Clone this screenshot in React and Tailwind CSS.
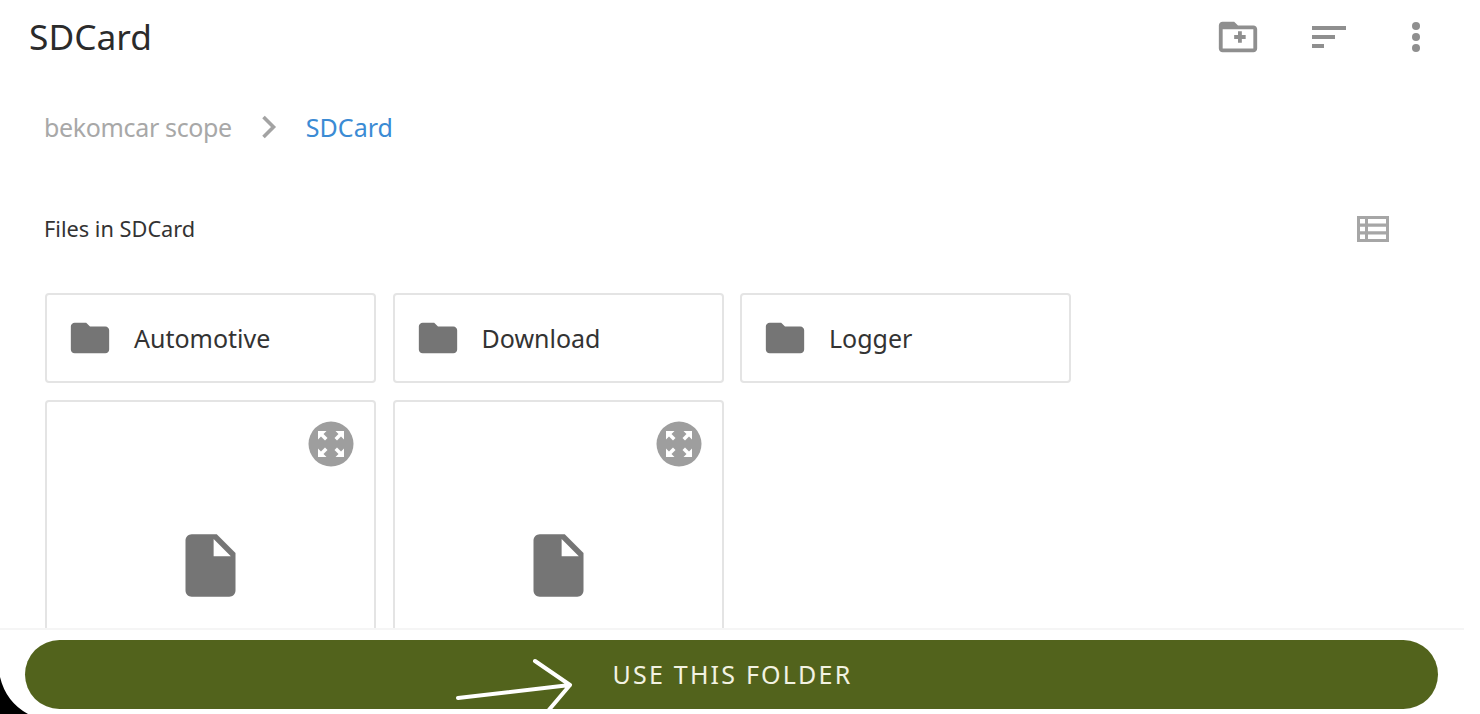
import React from 'react';

const font = { fontFamily: '"Noto Sans", "Open Sans", sans-serif' };

function FolderCard({ name }) {
  return (
    <div className="h-[90px] flex items-center pl-[20px] bg-white border-2 border-[#e4e4e4] rounded-[4px]">
      <svg className="w-[46px] h-[46px] shrink-0" viewBox="0 0 24 24" fill="#757575">
        <path d="M10 4H4c-1.1 0-2 .9-2 2v12c0 1.1.9 2 2 2h16c1.1 0 2-.9 2-2V8c0-1.1-.9-2-2-2h-8l-2-2z" />
      </svg>
      <span className="ml-[21px] text-[25px] leading-none text-[#333333]">{name}</span>
    </div>
  );
}

function FileCard() {
  return (
    <div className="relative h-[240px] flex justify-center pt-[126px] bg-white border-2 border-[#e4e4e4] rounded-[4px]">
      <svg className="absolute top-[19px] right-[20px] w-[46px] h-[46px]" viewBox="0 0 46 46">
        <circle cx="23" cy="23" r="22.5" fill="#9e9e9e" />
        <g fill="#fff">
          <path d="M10 10h8.500l-3 3 4 4-2.500 2.500-4-4-3 3z" />
          <path transform="rotate(90 23 23)" d="M10 10h8.500l-3 3 4 4-2.500 2.500-4-4-3 3z" />
          <path transform="rotate(180 23 23)" d="M10 10h8.500l-3 3 4 4-2.500 2.500-4-4-3 3z" />
          <path transform="rotate(270 23 23)" d="M10 10h8.500l-3 3 4 4-2.500 2.500-4-4-3 3z" />
        </g>
      </svg>
      <svg className="w-[75px] h-[75px]" viewBox="0 0 24 24" fill="#757575">
        <path d="M6 2c-1.100 0-2 .9-2 2v16c0 1.100.9 2 2 2h12c1.100 0 2-.9 2-2V8l-6-6H6zm7 7V3.500L18.500 9H13z" />
      </svg>
    </div>
  );
}

export default function App() {
  return (
    <div className="relative w-[1480px] h-[714px] overflow-hidden bg-white flex flex-col" style={font}>
      <div className="flex-1 min-h-0 overflow-hidden">
        <header className="h-[74px] flex items-center pl-[29px]">
          <h1 className="text-[35.3px] leading-none text-[#2b2b2b]">SDCard</h1>
          <div className="ml-auto flex items-center mr-[59px]">
            <svg className="w-[46px] h-[46px]" viewBox="0 0 24 24" fill="#8f8f8f">
              <path d="M20 6h-8l-2-2H4c-1.110 0-1.990.89-1.990 2L2 18c0 1.110.89 2 2 2h16c1.110 0 2-.89 2-2V8c0-1.110-.89-2-2-2zm0 12H4V8h16v10zm-8-3h2v-2h2v-2h-2V9h-2v2h-2v2h2v2z" />
            </svg>
            <svg className="ml-[50px] w-[36px] h-[24px]" viewBox="0 0 36 24" fill="#8f8f8f">
              <rect x="1" y="1" width="34" height="4" />
              <rect x="1" y="10" width="23" height="4" />
              <rect x="1" y="19" width="12" height="4" />
            </svg>
            <svg className="ml-[64px] w-[10px] h-[32px]" viewBox="0 0 10 32" fill="#8f8f8f">
              <circle cx="5" cy="5" r="4" />
              <circle cx="5" cy="16" r="4" />
              <circle cx="5" cy="27" r="4" />
            </svg>
          </div>
        </header>

        <nav className="mt-[31px] h-[44px] flex items-center pl-[44px] text-[25px] leading-none">
          <span className="text-[#a8a8a8] tracking-[-0.35px]">bekomcar scope</span>
          <svg className="ml-[29px] w-[16px] h-[26px]" viewBox="0 0 16 26" fill="none" stroke="#a3a3a3" strokeWidth="3.6">
            <path d="M2.500 3l10 10-10 10" />
          </svg>
          <span className="ml-[29px] text-[#3b8bd4]">SDCard</span>
        </nav>

        <div className="mt-[58px] h-[44px] flex items-center pl-[44px] pr-[90px]">
          <span className="text-[21.75px] leading-none text-[#333333]">Files in SDCard</span>
          <svg className="ml-auto w-[34px] h-[28px]" viewBox="0 0 34 28" fill="#a6a6a6">
            <path fillRule="evenodd" d="M1 1h32v26H1zM4 4v4.500h5V4zm8 0v4.500h18V4zM4 11.700v4.500h5v-4.500zm8 0v4.500h18v-4.500zM4 19.500V24h5v-4.500zm8 0V24h18v-4.500z" />
          </svg>
        </div>

        <div className="mt-[42px] ml-[45px] grid grid-cols-[repeat(3,331px)] gap-x-[16.5px] gap-y-[17px]">
          <FolderCard name="Automotive" />
          <FolderCard name="Download" />
          <FolderCard name="Logger" />
          <FileCard />
          <FileCard />
        </div>
      </div>

      <div className="relative h-[86px] shrink-0 w-[1464px] bg-white border-t-2 border-[#f5f5f5] pt-[10px] pl-[25px] pr-[26px]">
        <button className="w-full h-[69px] rounded-full bg-[#52631c] text-[#f2f2e2] text-[25px] tracking-[2.2px] leading-none pl-[2px]">
          USE THIS FOLDER
        </button>
      </div>

      {/* hand drawn arrow on top of the button */}
      <svg className="absolute left-[450px] top-[650px] w-[130px] h-[64px]" viewBox="0 0 130 64" fill="none" stroke="#ffffff" strokeWidth="4" strokeLinecap="round" strokeLinejoin="round">
        <path d="M8 48l112-13M85 11l35 24-22 26" />
      </svg>

      {/* black screen corner */}
      <svg className="absolute left-0 bottom-0 w-[28px] h-[38px]" viewBox="0 0 28 38" fill="#000000">
        <path d="M0 1Q6 26 28 38H0z" />
      </svg>
    </div>
  );
}
